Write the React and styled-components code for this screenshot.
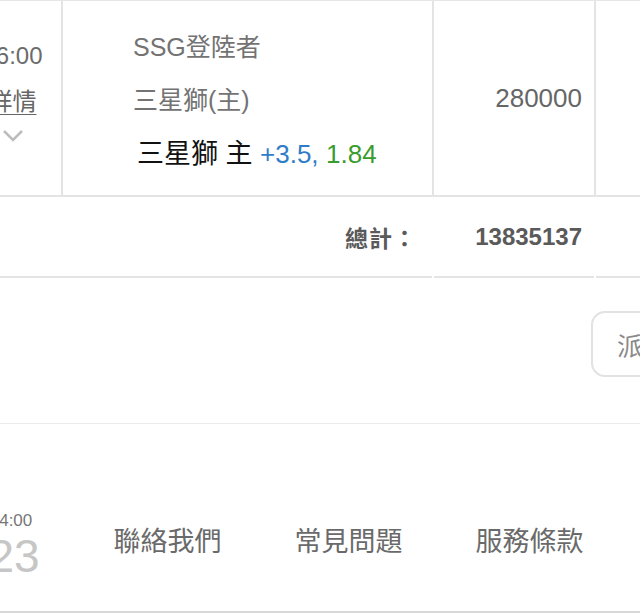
import React from 'react';
import styled, { createGlobalStyle } from 'styled-components';

const Global = createGlobalStyle`
  html, body {
    margin: 0;
    padding: 0;
    background: #fff;
    overflow: hidden;
  }
  body {
    font-family: "Liberation Sans", "Noto Sans CJK TC", sans-serif;
    color: #6b6b6b;
  }
`

const Page = styled.div`
  width: 676px;
  margin-left: -36px;
`

const Table = styled.div`
  border-top: 1px solid #e6e6e6;
`

const Row = styled.div`
  display: grid;
  grid-template-columns: ${p => p.cols};
  column-gap: ${p => p.gap || 0}px;
`

const Cell = styled.div`
  box-sizing: border-box;
  height: ${p => p.h}px;
  border-bottom: 2px solid #e4e4e4;
  border-right: ${p => (p.last ? 'none' : '2px solid #e4e4e4')};
  display: flex;
  flex-direction: column;
  justify-content: ${p => p.justify || 'flex-start'};
  align-items: ${p => p.align || 'flex-start'};
  padding: ${p => p.pad || '0'};
`

const TimeText = styled.div`
  font-size: 24px;
  line-height: 44px;
  color: #6b6b6b;
  white-space: nowrap;
`

const DetailLink = styled.a`
  font-family: "Noto Sans CJK TC", sans-serif;
  font-size: 24px;
  line-height: 44px;
  color: #666;
  text-decoration: underline;
  text-underline-offset: 4px;
  text-decoration-thickness: 1px;
`

const Chevron = styled.svg`
  margin-top: 7px;
`

const Line = styled.div`
  font-size: ${p => p.size || 25}px;
  line-height: ${p => p.lh || 53}px;
  color: ${p => p.color || '#737373'};
  padding-left: ${p => p.indent || 0}px;
  white-space: nowrap;
`

const Blue = styled.span`
  color: #2f7cc9;
  font-family: "Liberation Sans", sans-serif;
  font-size: 26px;
`

const Green = styled.span`
  color: #3a9b2f;
  font-family: "Liberation Sans", sans-serif;
  font-size: 26px;
`

const Amount = styled.div`
  font-size: 26px;
  color: #666;
`

const TotalLabel = styled.div`
  font-size: 23px;
  font-weight: 700;
  color: #5a5a5a;
  letter-spacing: 1px;
`

const TotalValue = styled.div`
  font-size: 24px;
  font-weight: 700;
  color: #5a5a5a;
`

const ActionRow = styled.div`
  height: 146px;
  box-sizing: border-box;
  border-bottom: 1px solid #ebebeb;
  display: flex;
  align-items: center;
  padding-left: 627px;
  padding-bottom: 13px;
`

const ActionButton = styled.button`
  flex-shrink: 0;
  height: 66px;
  padding: 0 24px;
  border: 2px solid #e2e2e2;
  border-radius: 14px;
  background: #fff;
  font-family: "Noto Sans CJK TC", sans-serif;
  font-size: 26px;
  color: #8a8a8a;
  white-space: nowrap;
`

const Footer = styled.footer`
  height: 189px;
  box-sizing: border-box;
  padding-top: 44px;
  display: flex;
  align-items: center;
  border-bottom: 2px solid #d8d8d8;
  box-shadow: 0 2px 0 #efefef;
`

const Clock = styled.div`
  width: 100px;
  text-align: center;
  margin-right: 13px;
  padding-top: 10px;
`

const ClockTime = styled.div`
  font-size: 17px;
  line-height: 22px;
  color: #777;
  padding-right: 6px;
`

const ClockDay = styled.div`
  font-size: 46px;
  line-height: 48px;
  color: #c6c6c6;
`

const FooterLink = styled.a`
  width: 181px;
  text-align: center;
  font-family: "Noto Sans CJK TC", sans-serif;
  font-size: 27px;
  color: #6a6a6a;
  text-decoration: none;
`

export default function App() {
  return (
    <Page>
      <Global />
      <Table>
        <Row cols="99px 371px 162px 1fr">
          <Cell h={196} align="center" pad="33px 0 0">
            <TimeText>16:00</TimeText>
            <DetailLink>詳情</DetailLink>
            <Chevron width="22" height="14" viewBox="0 0 22 14">
              <polyline points="2,2 11,11 20,2" fill="none" stroke="#bdbdbd" strokeWidth="2.6" />
            </Chevron>
          </Cell>
          <Cell h={196} pad="20px 0 0 70px">
            <Line>SSG登陸者</Line>
            <Line>三星獅(主)</Line>
            <Line size={27} lh={54} color="#111" indent={4}>
              三星獅 主 <Blue>+3.5,</Blue> <Green>1.84</Green>
            </Line>
          </Cell>
          <Cell h={196} justify="center" align="flex-end" pad="0 12px 0 0">
            <Amount>280000</Amount>
          </Cell>
          <Cell h={196} last />
        </Row>
        <Row cols="468px 160px 1fr" gap={2}>
          <Cell h={81} last justify="center" align="flex-end" pad="0 15px 0 0">
            <TotalLabel>總計：</TotalLabel>
          </Cell>
          <Cell h={81} last justify="center" align="flex-end" pad="0 12px 0 0">
            <TotalValue>13835137</TotalValue>
          </Cell>
          <Cell h={81} last />
        </Row>
      </Table>
      <ActionRow>
        <ActionButton>派彩</ActionButton>
      </ActionRow>
      <Footer>
        <Clock>
          <ClockTime>14:00</ClockTime>
          <ClockDay>23</ClockDay>
        </Clock>
        <FooterLink>聯絡我們</FooterLink>
        <FooterLink>常見問題</FooterLink>
        <FooterLink>服務條款</FooterLink>
      </Footer>
    </Page>
  );
}
